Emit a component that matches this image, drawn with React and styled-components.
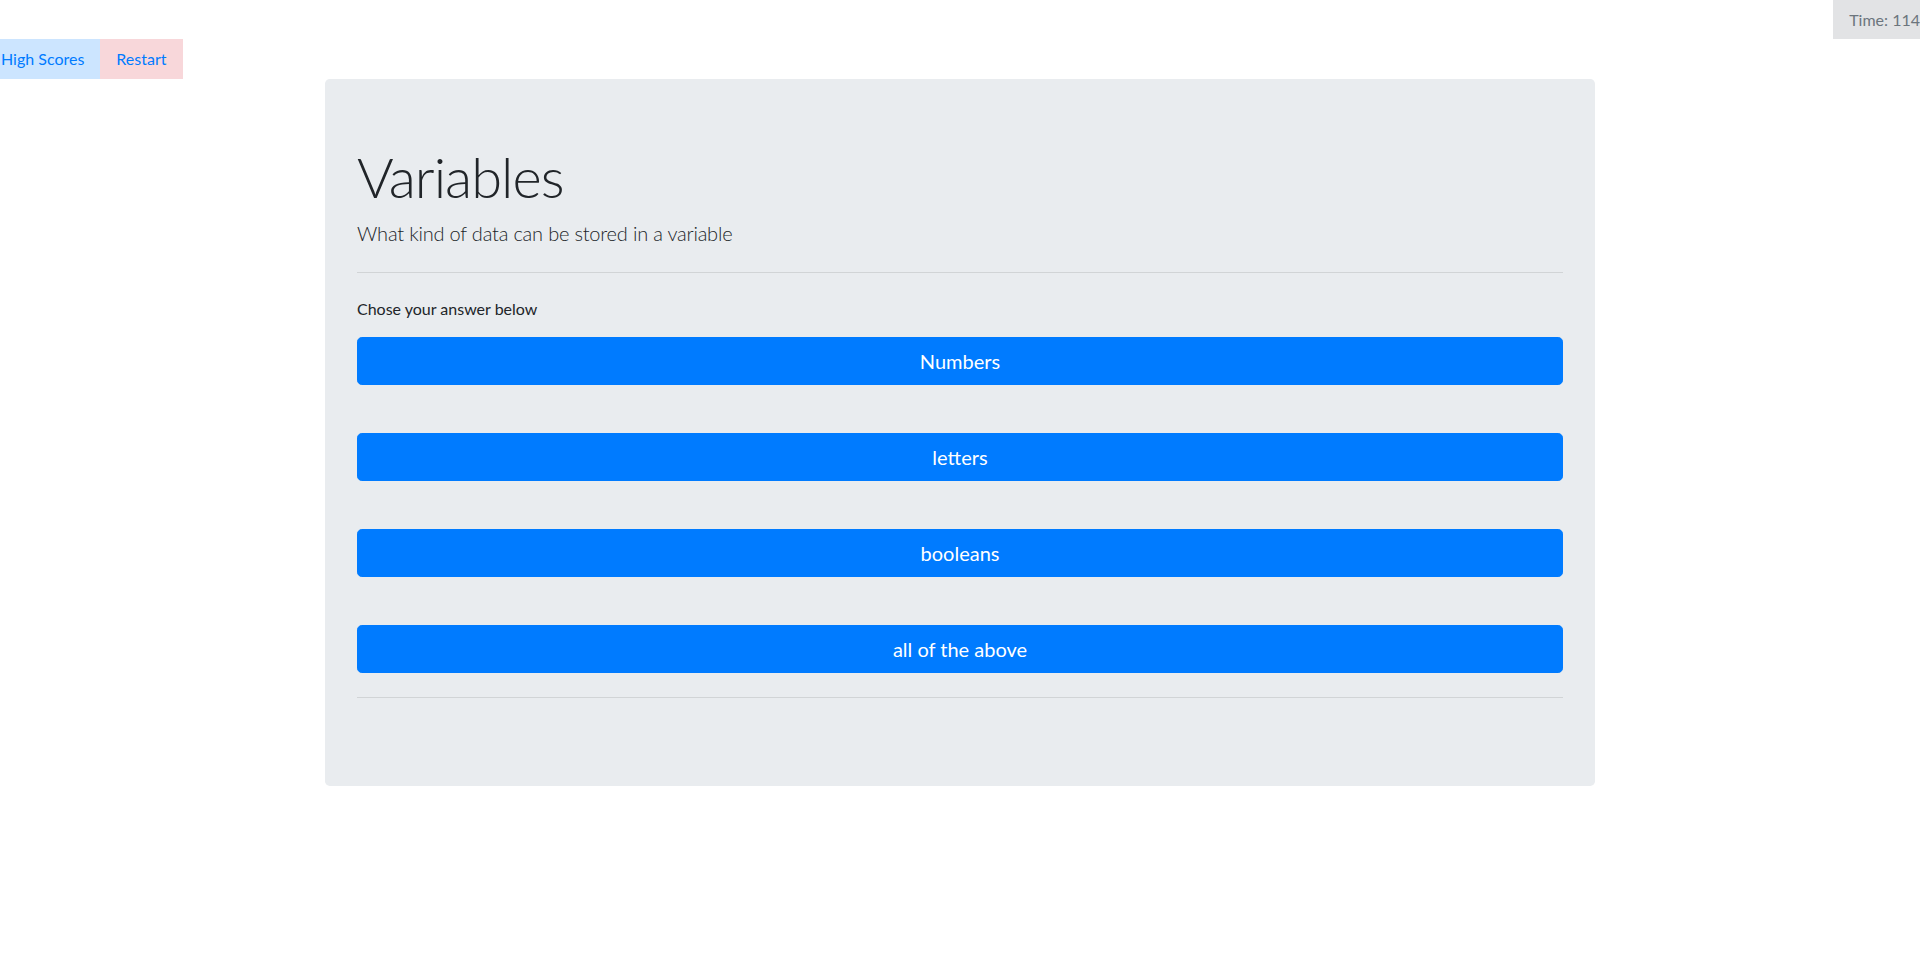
import * as React from 'react';
import styled, { createGlobalStyle } from 'styled-components';

const GlobalStyle = createGlobalStyle`
  body {
    margin: 0;
    font-family: "Segoe UI", Lato, "Liberation Sans", sans-serif;
    font-size: 16px;
    line-height: 1.5;
    color: #212529;
    background: #fff;
  }
`;

const answers = ['Numbers', 'letters', 'booleans', 'all of the above'];

export default function App() {
  return (
    <>
      <GlobalStyle />
      <Row $justify="flex-end">
        <Timer>Time: 114</Timer>
      </Row>
      <Row>
        <NavButton $bg="#cce5ff">High Scores</NavButton>
        <NavButton $bg="#f8d7da">Restart</NavButton>
      </Row>
      <Jumbotron>
        <Title>Variables</Title>
        <Lead>What kind of data can be stored in a variable</Lead>
        <Rule />
        <Prompt>Chose your answer below</Prompt>
        <AnswerList>
          {answers.map((a) => (
            <AnswerButton key={a}>{a}</AnswerButton>
          ))}
        </AnswerList>
        <Rule />
      </Jumbotron>
    </>
  );
}

const Row = styled.div`
  display: flex;
  justify-content: ${(p) => p.$justify || 'flex-start'};
  margin: 0 -15px;
`;

const Timer = styled.div`
  background: #e2e3e5;
  color: #6c757d;
  padding: 8px 15px 7px 16px;
  line-height: 24px;
`;

const NavButton = styled.button`
  background: ${(p) => p.$bg};
  color: #007bff;
  border: 0;
  border-radius: 0;
  padding: 8px 16px;
  font: inherit;
  line-height: 24px;
  cursor: pointer;
`;

const Jumbotron = styled.div`
  width: 1270px;
  margin: 0 auto;
  box-sizing: border-box;
  padding: 64px 32px;
  background: #e9ecef;
  border-radius: 4.8px;
`;

const Title = styled.h1`
  margin: 0 0 8px;
  font-size: 56px;
  font-weight: 300;
  line-height: 1.2;
  letter-spacing: -1px;
`;

const Lead = styled.p`
  margin: 0 0 16px;
  font-size: 20px;
  font-weight: 300;
  line-height: 30px;
  letter-spacing: -0.2px;
`;

const Rule = styled.hr`
  margin: 24px 0;
  border: 0;
  border-top: 1px solid rgba(0, 0, 0, 0.1);
`;

const Prompt = styled.p`
  margin: 0 0 16px;
`;

const AnswerList = styled.div`
  display: flex;
  flex-direction: column;
  gap: 48px;
`;

const AnswerButton = styled.button`
  display: block;
  width: 100%;
  padding: 8px 16px;
  font: inherit;
  font-size: 20px;
  line-height: 30px;
  color: #fff;
  background: #007bff;
  border: 1px solid #007bff;
  border-radius: 4.8px;
  cursor: pointer;
`;
